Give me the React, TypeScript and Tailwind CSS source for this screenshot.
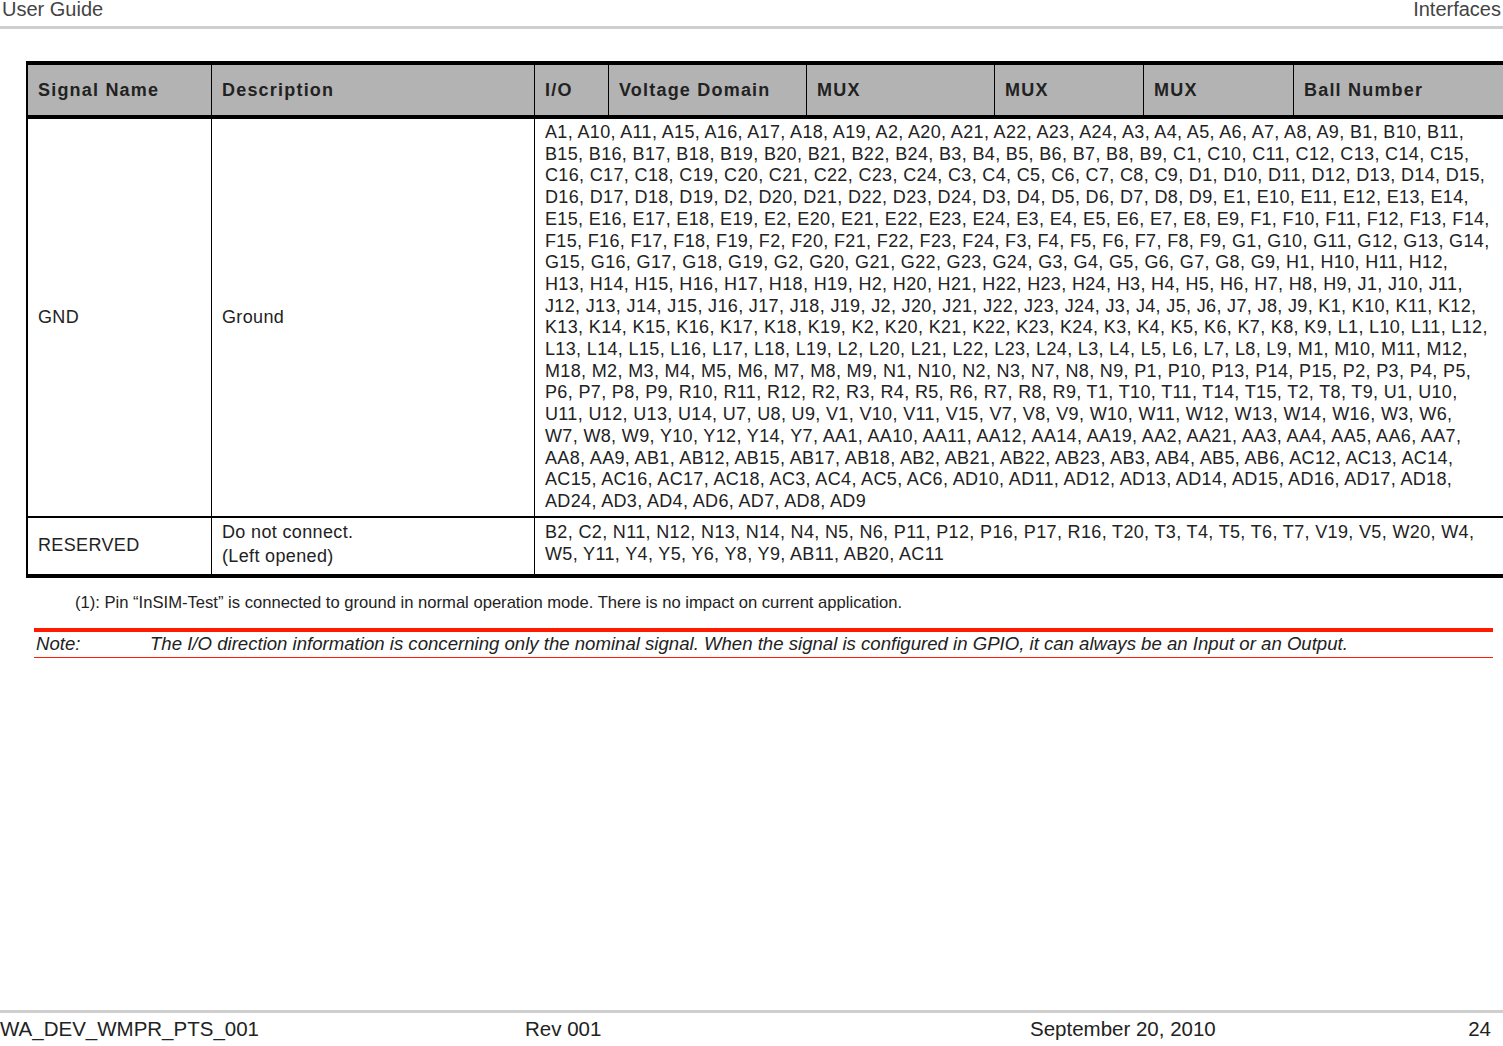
const lines = [
  "A1, A10, A11, A15, A16, A17, A18, A19, A2, A20, A21, A22, A23, A24, A3, A4, A5, A6, A7, A8, A9, B1, B10, B11,",
  "B15, B16, B17, B18, B19, B20, B21, B22, B24, B3, B4, B5, B6, B7, B8, B9, C1, C10, C11, C12, C13, C14, C15,",
  "C16, C17, C18, C19, C20, C21, C22, C23, C24, C3, C4, C5, C6, C7, C8, C9, D1, D10, D11, D12, D13, D14, D15,",
  "D16, D17, D18, D19, D2, D20, D21, D22, D23, D24, D3, D4, D5, D6, D7, D8, D9, E1, E10, E11, E12, E13, E14,",
  "E15, E16, E17, E18, E19, E2, E20, E21, E22, E23, E24, E3, E4, E5, E6, E7, E8, E9, F1, F10, F11, F12, F13, F14,",
  "F15, F16, F17, F18, F19, F2, F20, F21, F22, F23, F24, F3, F4, F5, F6, F7, F8, F9, G1, G10, G11, G12, G13, G14,",
  "G15, G16, G17, G18, G19, G2, G20, G21, G22, G23, G24, G3, G4, G5, G6, G7, G8, G9, H1, H10, H11, H12,",
  "H13, H14, H15, H16, H17, H18, H19, H2, H20, H21, H22, H23, H24, H3, H4, H5, H6, H7, H8, H9, J1, J10, J11,",
  "J12, J13, J14, J15, J16, J17, J18, J19, J2, J20, J21, J22, J23, J24, J3, J4, J5, J6, J7, J8, J9, K1, K10, K11, K12,",
  "K13, K14, K15, K16, K17, K18, K19, K2, K20, K21, K22, K23, K24, K3, K4, K5, K6, K7, K8, K9, L1, L10, L11, L12,",
  "L13, L14, L15, L16, L17, L18, L19, L2, L20, L21, L22, L23, L24, L3, L4, L5, L6, L7, L8, L9, M1, M10, M11, M12,",
  "M18, M2, M3, M4, M5, M6, M7, M8, M9, N1, N10, N2, N3, N7, N8, N9, P1, P10, P13, P14, P15, P2, P3, P4, P5,",
  "P6, P7, P8, P9, R10, R11, R12, R2, R3, R4, R5, R6, R7, R8, R9, T1, T10, T11, T14, T15, T2, T8, T9, U1, U10,",
  "U11, U12, U13, U14, U7, U8, U9, V1, V10, V11, V15, V7, V8, V9, W10, W11, W12, W13, W14, W16, W3, W6,",
  "W7, W8, W9, Y10, Y12, Y14, Y7, AA1, AA10, AA11, AA12, AA14, AA19, AA2, AA21, AA3, AA4, AA5, AA6, AA7,",
  "AA8, AA9, AB1, AB12, AB15, AB17, AB18, AB2, AB21, AB22, AB23, AB3, AB4, AB5, AB6, AC12, AC13, AC14,",
  "AC15, AC16, AC17, AC18, AC3, AC4, AC5, AC6, AD10, AD11, AD12, AD13, AD14, AD15, AD16, AD17, AD18,",
  "AD24, AD3, AD4, AD6, AD7, AD8, AD9",
];

const heads = ["Signal Name", "Description", "I/O", "Voltage Domain", "MUX", "MUX", "MUX", "Ball Number"];
const widths = ["w-[183px]", "w-[323px]", "w-[74px]", "w-[198px]", "w-[188px]", "w-[149px]", "w-[150px]", "flex-1"];

export default function App() {
  return (
    <div className="w-[1503px] h-[1046px] bg-white text-[#222] flex flex-col overflow-hidden" style={{ fontFamily: '"Liberation Sans", Arial, sans-serif' }}>
      <div className="flex justify-between px-[2px] h-[29px] border-b-[3px] border-[#cfcfcf] text-[20px] text-[#444] leading-[18px]">
        <span>User Guide</span>
        <span>Interfaces</span>
      </div>
      <div className="ml-[26px] mt-[32px] border-t-[4px] border-b-[4px] border-l-[2px] border-black">
        <div className="flex bg-[#b3b3b3] h-[54px] border-b-[4px] border-black">
          {heads.map((h, i) => (
            <div key={i} className={`${widths[i]} ${i > 0 ? "border-l border-black" : ""} flex items-center px-[10px] font-bold text-[18px] tracking-[1.2px]`}>{h}</div>
          ))}
        </div>
        <div className="flex border-b-2 border-black text-[18px] tracking-[0.35px]">
          <div className="w-[183px] flex items-center px-[10px]">GND</div>
          <div className="w-[323px] border-l border-black flex items-center px-[10px]">Ground</div>
          <div className="flex-1 border-l border-black px-[10px] py-[3px] leading-[21.7px]">
            {lines.map((l, i) => <div key={i} className="whitespace-nowrap">{l}</div>)}
          </div>
        </div>
        <div className="flex text-[18px] tracking-[0.35px] h-[56px]">
          <div className="w-[183px] flex items-center px-[10px]">RESERVED</div>
          <div className="w-[323px] border-l border-black px-[10px] pt-[3px]">
            <div className="leading-[22px]">Do not connect.</div>
            <div className="leading-[26px]">(Left opened)</div>
          </div>
          <div className="flex-1 border-l border-black px-[10px] pt-[3px] leading-[22px]">
            <div className="whitespace-nowrap">B2, C2, N11, N12, N13, N14, N4, N5, N6, P11, P12, P16, P17, R16, T20, T3, T4, T5, T6, T7, V19, V5, W20, W4,</div>
            <div>W5, Y11, Y4, Y5, Y6, Y8, Y9, AB11, AB20, AC11</div>
          </div>
        </div>
      </div>
      <div className="ml-[75px] mt-[13px] text-[16.6px] whitespace-nowrap">(1): Pin “InSIM-Test” is connected to ground in normal operation mode. There is no impact on current application.</div>
      <div className="ml-[34px] mr-[10px] mt-[12px] border-t-[4px] border-[#ff1a00] border-b border-b-[#ff1a00] flex italic text-[18.6px] h-[30px] items-center whitespace-nowrap">
        <span className="w-[116px] pl-[2px]">Note:</span>
        <span>The I/O direction information is concerning only the nominal signal. When the signal is configured in GPIO, it can always be an Input or an Output.</span>
      </div>
      <div className="flex-1" />
      <div className="border-t-[3px] border-[#cfcfcf] h-[36px] flex items-center text-[20.5px] text-[#222]">
        <span className="w-[525px]">WA_DEV_WMPR_PTS_001</span>
        <span className="w-[505px]">Rev 001</span>
        <span className="flex-1">September 20, 2010</span>
        <span className="pr-[12px]">24</span>
      </div>
    </div>
  );
}
